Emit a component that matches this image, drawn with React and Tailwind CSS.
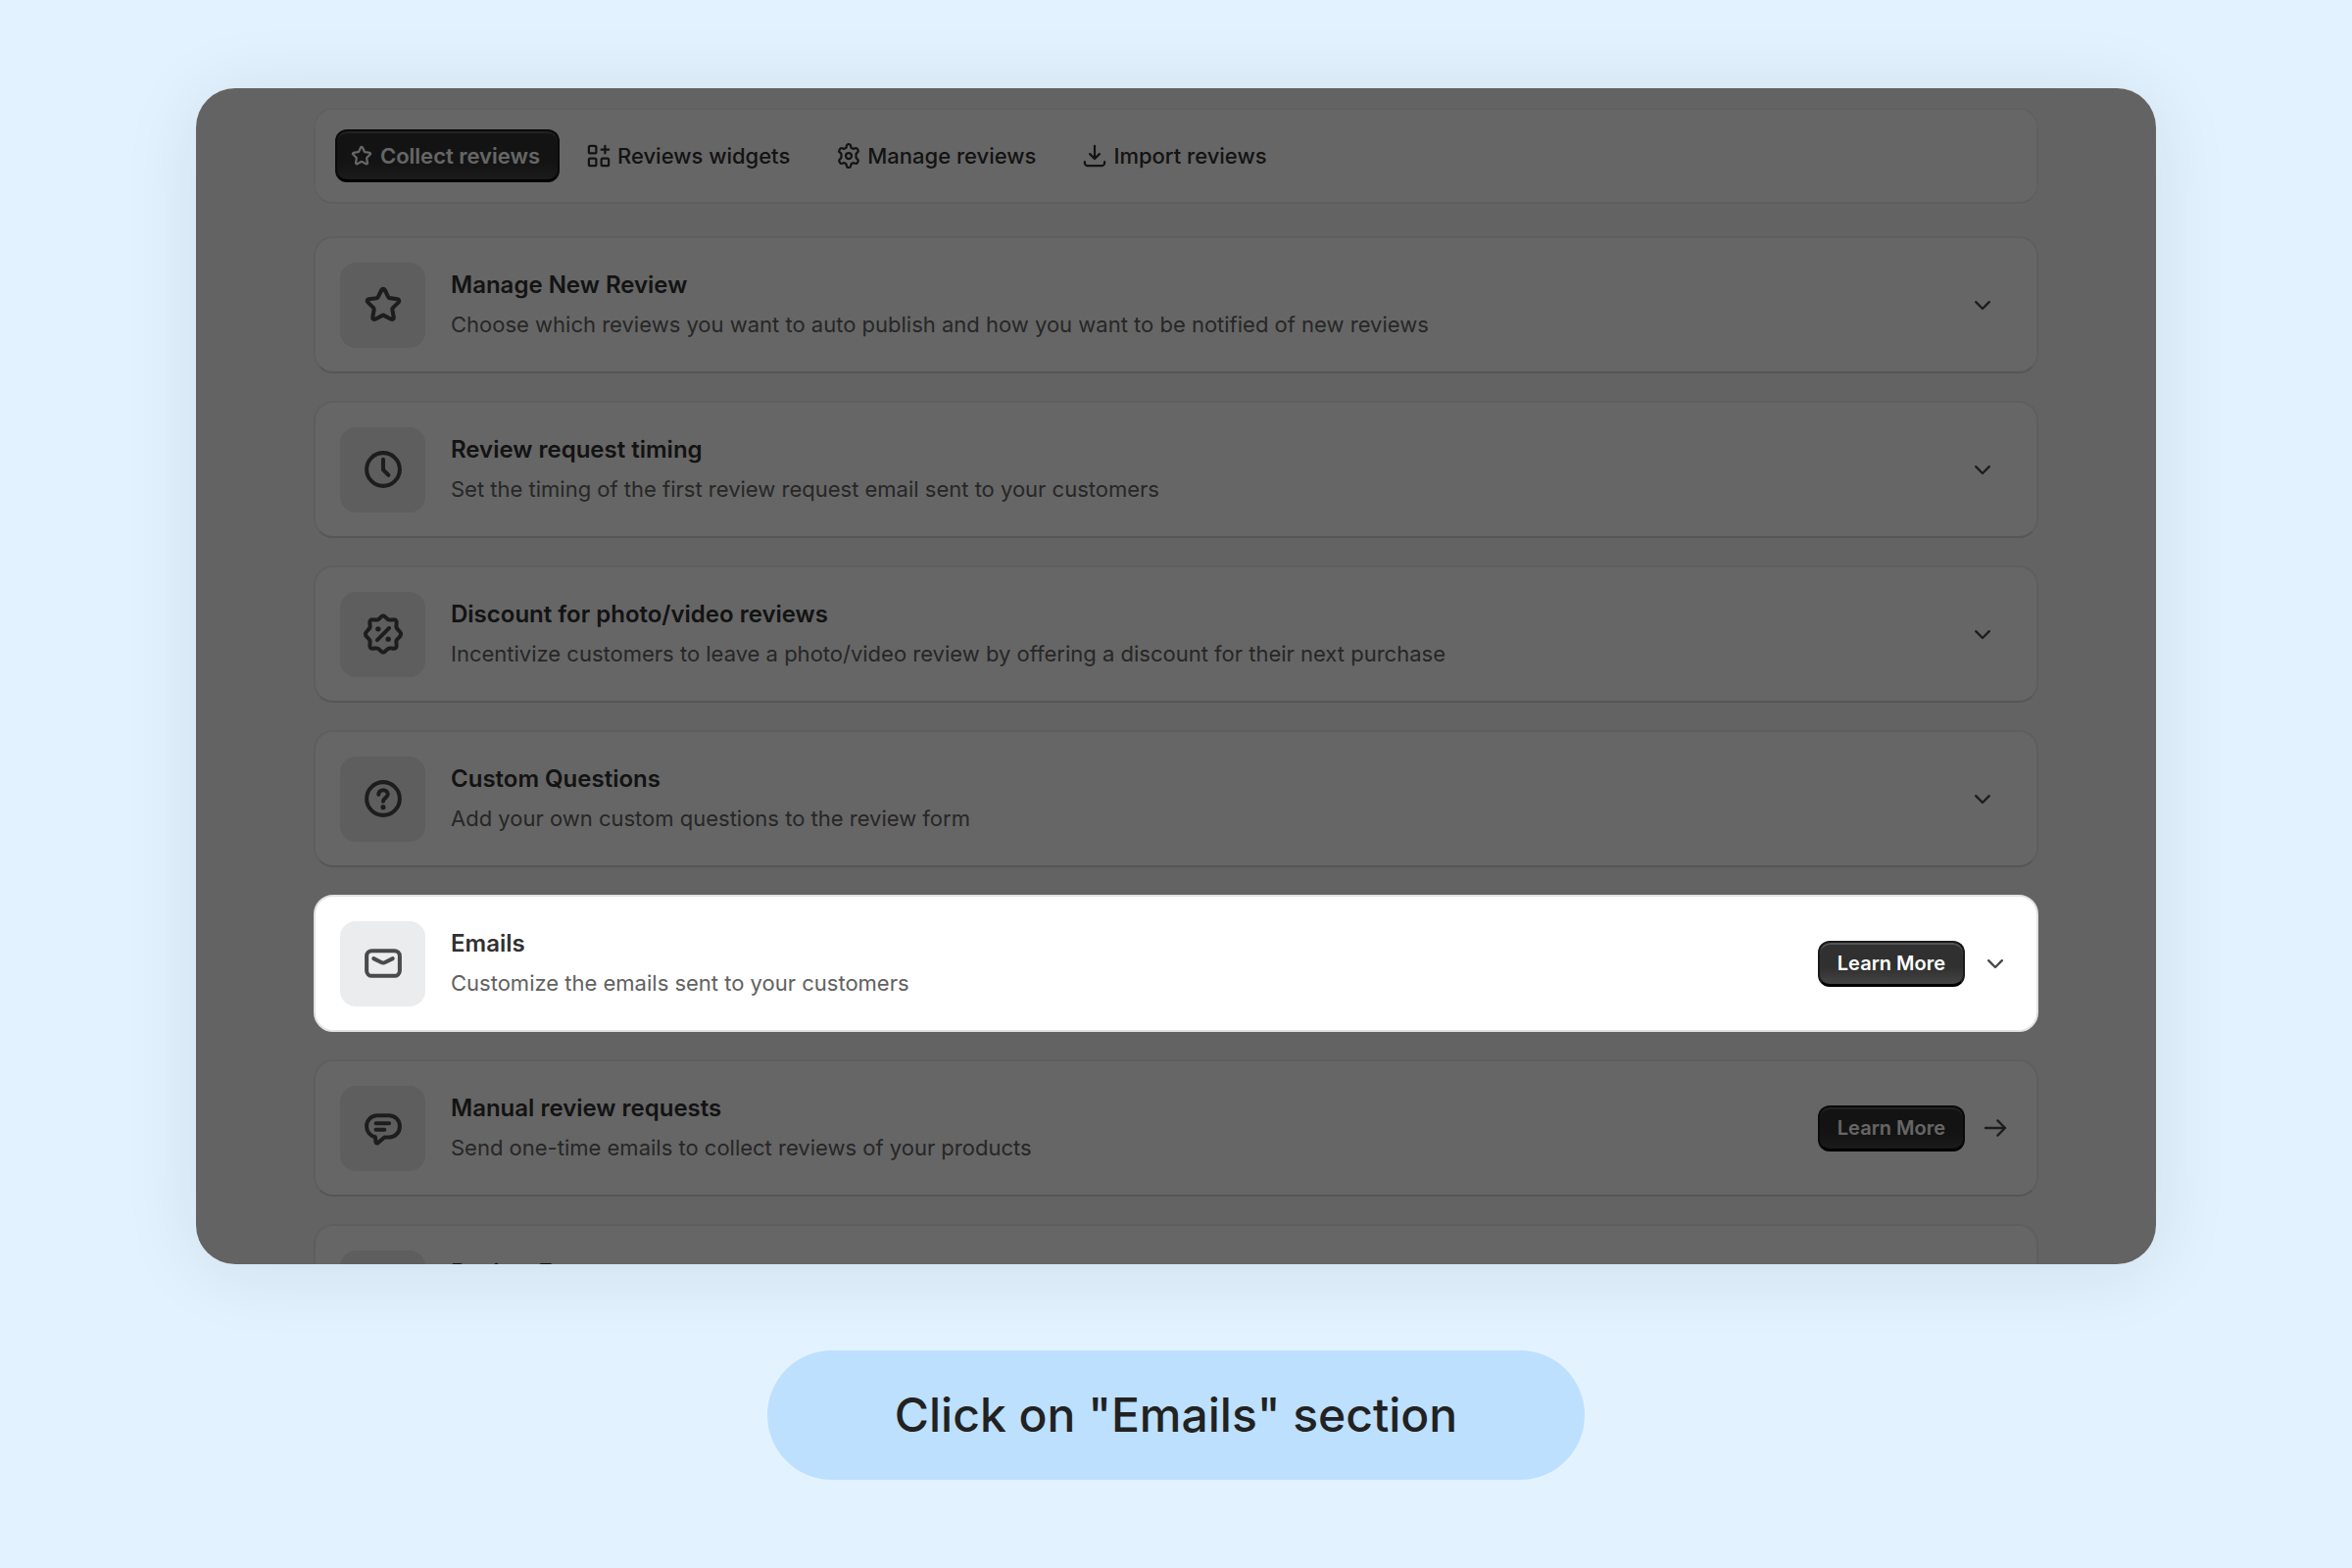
import { useState } from "react";

const tabs = [
  { id: "collect", label: "Collect reviews", Icon: StarIcon },
  { id: "widgets", label: "Reviews widgets", Icon: WidgetsIcon },
  { id: "manage", label: "Manage reviews", Icon: GearIcon },
  { id: "import", label: "Import reviews", Icon: ImportIcon }
];

const sections = [
  {
    title: "Manage New Review",
    text: "Choose which reviews you want to auto publish and how you want to be notified of new reviews",
    Icon: StarIcon
  },
  {
    title: "Review request timing",
    text: "Set the timing of the first review request email sent to your customers",
    Icon: ClockIcon
  },
  {
    title: "Discount for photo/video reviews",
    text: "Incentivize customers to leave a photo/video review by offering a discount for their next purchase",
    Icon: DiscountIcon
  },
  {
    title: "Custom Questions",
    text: "Add your own custom questions to the review form",
    Icon: QuestionIcon
  },
  {
    title: "Emails",
    text: "Customize the emails sent to your customers",
    Icon: EmailIcon,
    learnMore: true,
    highlighted: true
  },
  {
    title: "Manual review requests",
    text: "Send one-time emails to collect reviews of your products",
    Icon: ChatIcon,
    learnMore: true,
    link: true
  },
  {
    title: "Review Form",
    text: "",
    Icon: StarIcon
  }
];

function Svg({ className, children }) {
  return (
    <svg
      className={className}
      viewBox="0 0 20 20"
      fill="none"
      stroke="currentColor"
      strokeWidth="1.5"
      strokeLinecap="round"
      strokeLinejoin="round"
      aria-hidden="true"
    >
      {children}
    </svg>
  );
}

function StarIcon({ className }) {
  return (
    <Svg className={className}>
      <path
        transform="translate(1.1 1.1) scale(0.89)"
        strokeWidth="1.7"
        d="M9.33 3.65a.75.75 0 0 1 1.34 0l1.5 3.1c.1.22.32.37.56.4l3.4.48a.75.75 0 0 1 .42 1.28l-2.46 2.38a.75.75 0 0 0-.22.67l.6 3.38a.75.75 0 0 1-1.09.79l-3.03-1.61a.75.75 0 0 0-.7 0l-3.03 1.6a.75.75 0 0 1-1.09-.78l.6-3.38a.75.75 0 0 0-.22-.67L3.45 8.91a.75.75 0 0 1 .42-1.28l3.4-.47a.75.75 0 0 0 .56-.41z"
      />
    </Svg>
  );
}

function WidgetsIcon({ className }) {
  return (
    <Svg className={className}>
      <rect x="3.25" y="3.25" width="5" height="5" rx="1" />
      <rect x="3.25" y="11.75" width="5" height="5" rx="1" />
      <rect x="11.75" y="11.75" width="5" height="5" rx="1" />
      <path d="M14.25 3.25v5M11.75 5.75h5" />
    </Svg>
  );
}

function GearIcon({ className }) {
  return (
    <Svg className={className}>
      <path d="M8.6 3.1c.1-.6.6-1.05 1.2-1.05h.4c.6 0 1.1.45 1.2 1.05l.15.9c.05.35.3.6.6.75l.5.3c.3.15.65.2.95.05l.85-.3a1.25 1.25 0 0 1 1.5.55l.4.7c.3.5.2 1.15-.25 1.55l-.7.6c-.3.2-.4.55-.4.9v1.8c0 .35.1.7.4.9l.7.6c.45.4.55 1.05.25 1.55l-.4.7a1.25 1.25 0 0 1-1.5.55l-.85-.3c-.3-.15-.65-.1-.95.05l-.5.3c-.3.15-.55.4-.6.75l-.15.9c-.1.6-.6 1.05-1.2 1.05h-.4c-.6 0-1.100-.45-1.200-1.050l-.15-.9c-.05-.35-.3-.6-.6-.75l-.5-.3c-.3-.15-.65-.2-.95-.05l-.85.3a1.250 1.250 0 0 1-1.500-.55l-.4-.7c-.3-.5-.2-1.150.25-1.550l.7-.6c.3-.2.4-.55.4-.9v-1.800c0-.35-.1-.7-.4-.9l-.7-.6a1.200 1.200 0 0 1-.25-1.550l.4-.7a1.250 1.250 0 0 1 1.500-.55l.85.3c.3.15.65.1.95-.05l.5-.3c.3-.15.55-.4.6-.75z" />
      <circle cx="10" cy="10" r="2" />
    </Svg>
  );
}

function ImportIcon({ className }) {
  return (
    <Svg className={className}>
      <path d="M10 3.25v8.5M6.75 8.75 10 12l3.25-3.25" />
      <path d="M3.25 14v.75a2 2 0 0 0 2 2h9.5a2 2 0 0 0 2-2V14" />
    </Svg>
  );
}

function ClockIcon({ className }) {
  return (
    <Svg className={className}>
      <circle cx="10" cy="10" r="6.25" />
      <path d="M10 6.25v3.9l2 2" />
    </Svg>
  );
}

function DiscountIcon({ className }) {
  return (
    <Svg className={className}>
      <path d="M10 3.1c.9 0 1.2 1.2 2.1 1.5.9.3 2-.5 2.7.2s-.1 1.8.2 2.7c.3.9 1.7 1.5 1.7 2.5s-1.4 1.6-1.7 2.5c-.3.9.5 2-.2 2.7s-1.8-.1-2.7.2c-.9.3-1.2 1.5-2.1 1.5s-1.2-1.2-2.1-1.5c-.9-.3-2 .5-2.7-.2s.1-1.8-.2-2.7c-.3-.9-1.7-1.500-1.700-2.500s1.400-1.600 1.700-2.500c.3-.9-.5-2 .2-2.700s1.800.1 2.700-.2c.9-.3 1.200-1.500 2.100-1.500z" />
      <path d="m7.75 12.25 4.5-4.5" />
      <circle cx="8.1" cy="8.1" r="1" fill="currentColor" stroke="none" />
      <circle cx="11.9" cy="11.9" r="1" fill="currentColor" stroke="none" />
    </Svg>
  );
}

function QuestionIcon({ className }) {
  return (
    <Svg className={className}>
      <circle cx="10" cy="10" r="6.25" />
      <path d="M8.25 8.4c0-.95.75-1.65 1.75-1.65s1.75.7 1.75 1.6c0 1.3-1.75 1.35-1.75 2.65" />
      <circle cx="10" cy="13.2" r=".95" fill="currentColor" stroke="none" />
    </Svg>
  );
}

function EmailIcon({ className }) {
  return (
    <Svg className={className}>
      <rect x="3.75" y="5.25" width="12.5" height="9.5" rx="2" />
      <path d="m6.4 8.2 2.9 1.45c.45.22.95.22 1.4 0l2.9-1.45" />
    </Svg>
  );
}

function ChatIcon({ className }) {
  return (
    <Svg className={className}>
      <path d="M7.75 5.25h4.5a4 4 0 0 1 4 4v.25a4 4 0 0 1-4 4h-1.750l-2.500 2.100c-.35.3-.85 0-.8-.45l-.2-1.750a4 4 0 0 1-3.250-3.900v-.25a4 4 0 0 1 4-4z" />
      <path d="M7.25 8.25h5M7.25 10.65h3.25" />
    </Svg>
  );
}

function ChevronIcon({ className }) {
  return (
    <Svg className={className}>
      <path d="M5.75 8.25 10 12.500l4.250-4.250" />
    </Svg>
  );
}

function ArrowIcon({ className }) {
  return (
    <Svg className={className}>
      <path d="M3.750 10h12.500M11.500 5.250 16.250 10l-4.750 4.750" />
    </Svg>
  );
}

const darkButton =
  "border-2 border-[#1a1a1a] border-b-3 border-b-black bg-linear-to-b from-[#303030] from-60% to-[#444444] inset-shadow-[0_2px_0_#555555] text-white";

function Section({ title, text, Icon, learnMore, highlighted, link }) {
  return (
    <section
      className={`flex h-[140px] shrink-0 items-center gap-[26px] rounded-[20px] border-2 bg-white pl-[25px] ${
        highlighted
          ? "relative z-20 border-[#e3e3e3]"
          : "border-[#ebebeb] border-b-[#d8d8d8]"
      } ${learnMore ? "pr-[26px]" : "pr-[39px]"}`}
    >
      <div className="flex size-[87px] shrink-0 items-center justify-center rounded-2xl bg-[#ebecee] text-[#4a4a4a]">
        <Icon className="size-[54px]" />
      </div>
      <div className="flex min-w-0 flex-1 flex-col gap-2">
        <h2 className="text-2xl leading-8 font-semibold text-[#303030]">{title}</h2>
        <p className="min-h-8 text-[22px] leading-8 text-[#616161]">{text}</p>
      </div>
      {learnMore && (
        <button
          type="button"
          className={`h-[47px] shrink-0 rounded-xl px-[18px] text-[20px] leading-6 font-semibold ${darkButton}`}
        >
          Learn More
        </button>
      )}
      <button
        type="button"
        aria-label={`Open ${title}`}
        className="-ml-[11px] shrink-0 text-[#4a4a4a]"
      >
        {link ? <ArrowIcon className="size-8" /> : <ChevronIcon className="size-8" />}
      </button>
    </section>
  );
}

export default function App() {
  const [active, setActive] = useState("collect");

  return (
    <main className="flex min-h-screen flex-col items-center bg-[#e2f3ff] pt-[90px] font-[Inter,sans-serif]">
      <div className="relative aspect-5/3 w-10/12 overflow-hidden rounded-[40px] bg-[#f7f7f7] px-[120px] pt-5 shadow-[0_6px_80px_rgba(0,0,0,0.09)]">
        <nav className="mb-[33px] flex h-[98px] items-center gap-[13px] rounded-[20px] border-2 border-[#f0f0f0] border-b-[#ebebeb] bg-white px-5">
          {tabs.map(({ id, label, Icon }) => (
            <button
              key={id}
              type="button"
              onClick={() => setActive(id)}
              className={`flex h-[54px] items-center gap-1 rounded-xl pr-[18px] pl-[10px] text-[22px] leading-8 ${
                active === id
                  ? `font-semibold ${darkButton}`
                  : "border-2 border-transparent font-medium text-[#303030]"
              }`}
            >
              <Icon className="size-[30px]" />
              {label}
            </button>
          ))}
        </nav>
        <div className="flex flex-col gap-7">
          {sections.map((section) => (
            <Section key={section.title} {...section} />
          ))}
        </div>
        <div className="absolute inset-0 z-10 bg-black/60"></div>
      </div>
      <p className="mt-[88px] rounded-full bg-[#bde0fe] px-[130px] py-[34px] text-5xl leading-16 font-medium text-[#222222]">
        Click on "Emails" section
      </p>
    </main>
  );
}
